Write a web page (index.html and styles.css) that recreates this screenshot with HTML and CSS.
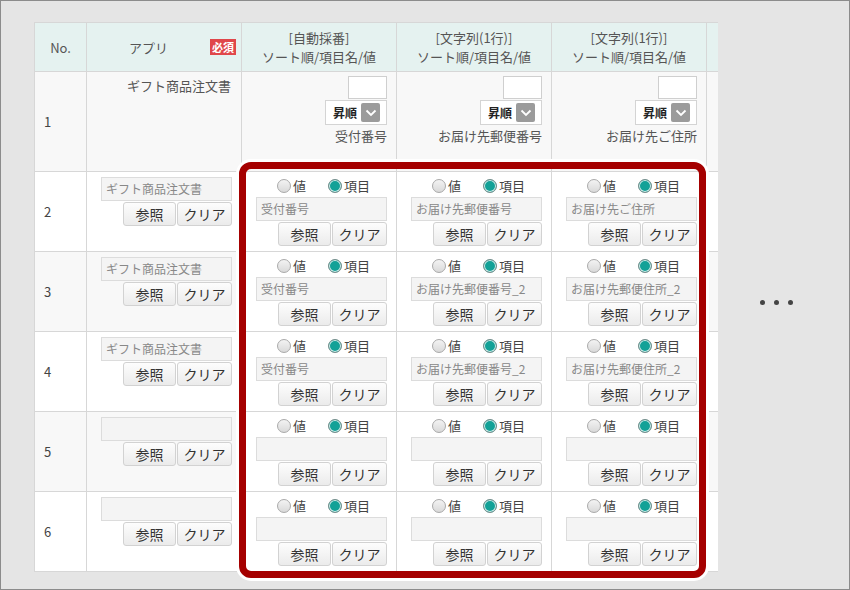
FILE: index.html
```html
<!DOCTYPE html>
<html lang="ja">
<head>
<meta charset="utf-8">
<link rel="stylesheet" href="styles.css">
</head>
<body>
<div class="frame">
  <div class="sheet">
    <!-- header -->
    <div class="hd">No.</div>
    <div class="hd hd-app"><span class="hd-label">アプリ</span><span class="badge">必須</span></div>
    <div class="hd hd-field"><span>[自動採番]</span><span>ソート順/項目名/値</span></div>
    <div class="hd hd-field"><span>[文字列(1行)]</span><span>ソート順/項目名/値</span></div>
    <div class="hd hd-field"><span>[文字列(1行)]</span><span>ソート順/項目名/値</span></div>
    <div class="hd"></div>

    <!-- row 1 -->
    <div class="c no r-alt">1</div>
    <div class="c app1 r-alt">ギフト商品注文書</div>
    <div class="c fld1 r-alt"><div class="num"></div><div class="sel"><span class="sel-t">昇順</span><span class="sel-a"><svg width="12" height="8" viewBox="0 0 12 8"><path d="M1.5 1.5 L6 6 L10.5 1.5" fill="none" stroke="#fff" stroke-width="1.8"/></svg></span></div><div class="lbl">受付番号</div></div>
    <div class="c fld1 r-alt"><div class="num"></div><div class="sel"><span class="sel-t">昇順</span><span class="sel-a"><svg width="12" height="8" viewBox="0 0 12 8"><path d="M1.5 1.5 L6 6 L10.5 1.5" fill="none" stroke="#fff" stroke-width="1.8"/></svg></span></div><div class="lbl">お届け先郵便番号</div></div>
    <div class="c fld1 r-alt"><div class="num"></div><div class="sel"><span class="sel-t">昇順</span><span class="sel-a"><svg width="12" height="8" viewBox="0 0 12 8"><path d="M1.5 1.5 L6 6 L10.5 1.5" fill="none" stroke="#fff" stroke-width="1.8"/></svg></span></div><div class="lbl">お届け先ご住所</div></div>
    <div class="c r-alt"></div>

    <!-- row 2 -->
    <div class="c no">2</div>
    <div class="c app"><div class="field">ギフト商品注文書</div><div class="btns"><span class="btn b1">参照</span><span class="btn b2">クリア</span></div></div>
    <div class="c val"><div class="radios"><span class="rd"></span><span class="rl">値</span><span class="rd on"></span><span class="rl">項目</span></div><div class="field">受付番号</div><div class="btns"><span class="btn b1">参照</span><span class="btn b2">クリア</span></div></div>
    <div class="c val"><div class="radios"><span class="rd"></span><span class="rl">値</span><span class="rd on"></span><span class="rl">項目</span></div><div class="field">お届け先郵便番号</div><div class="btns"><span class="btn b1">参照</span><span class="btn b2">クリア</span></div></div>
    <div class="c val"><div class="radios"><span class="rd"></span><span class="rl">値</span><span class="rd on"></span><span class="rl">項目</span></div><div class="field">お届け先ご住所</div><div class="btns"><span class="btn b1">参照</span><span class="btn b2">クリア</span></div></div>
    <div class="c"></div>

    <!-- row 3 -->
    <div class="c no r-alt">3</div>
    <div class="c app r-alt"><div class="field">ギフト商品注文書</div><div class="btns"><span class="btn b1">参照</span><span class="btn b2">クリア</span></div></div>
    <div class="c val"><div class="radios"><span class="rd"></span><span class="rl">値</span><span class="rd on"></span><span class="rl">項目</span></div><div class="field">受付番号</div><div class="btns"><span class="btn b1">参照</span><span class="btn b2">クリア</span></div></div>
    <div class="c val"><div class="radios"><span class="rd"></span><span class="rl">値</span><span class="rd on"></span><span class="rl">項目</span></div><div class="field">お届け先郵便番号_2</div><div class="btns"><span class="btn b1">参照</span><span class="btn b2">クリア</span></div></div>
    <div class="c val"><div class="radios"><span class="rd"></span><span class="rl">値</span><span class="rd on"></span><span class="rl">項目</span></div><div class="field">お届け先郵便住所_2</div><div class="btns"><span class="btn b1">参照</span><span class="btn b2">クリア</span></div></div>
    <div class="c r-alt"></div>

    <!-- row 4 -->
    <div class="c no">4</div>
    <div class="c app"><div class="field">ギフト商品注文書</div><div class="btns"><span class="btn b1">参照</span><span class="btn b2">クリア</span></div></div>
    <div class="c val"><div class="radios"><span class="rd"></span><span class="rl">値</span><span class="rd on"></span><span class="rl">項目</span></div><div class="field">受付番号</div><div class="btns"><span class="btn b1">参照</span><span class="btn b2">クリア</span></div></div>
    <div class="c val"><div class="radios"><span class="rd"></span><span class="rl">値</span><span class="rd on"></span><span class="rl">項目</span></div><div class="field">お届け先郵便番号_2</div><div class="btns"><span class="btn b1">参照</span><span class="btn b2">クリア</span></div></div>
    <div class="c val"><div class="radios"><span class="rd"></span><span class="rl">値</span><span class="rd on"></span><span class="rl">項目</span></div><div class="field">お届け先郵便住所_2</div><div class="btns"><span class="btn b1">参照</span><span class="btn b2">クリア</span></div></div>
    <div class="c"></div>

    <!-- row 5 -->
    <div class="c no r-alt">5</div>
    <div class="c app r-alt"><div class="field"></div><div class="btns"><span class="btn b1">参照</span><span class="btn b2">クリア</span></div></div>
    <div class="c val"><div class="radios"><span class="rd"></span><span class="rl">値</span><span class="rd on"></span><span class="rl">項目</span></div><div class="field"></div><div class="btns"><span class="btn b1">参照</span><span class="btn b2">クリア</span></div></div>
    <div class="c val"><div class="radios"><span class="rd"></span><span class="rl">値</span><span class="rd on"></span><span class="rl">項目</span></div><div class="field"></div><div class="btns"><span class="btn b1">参照</span><span class="btn b2">クリア</span></div></div>
    <div class="c val"><div class="radios"><span class="rd"></span><span class="rl">値</span><span class="rd on"></span><span class="rl">項目</span></div><div class="field"></div><div class="btns"><span class="btn b1">参照</span><span class="btn b2">クリア</span></div></div>
    <div class="c r-alt"></div>

    <!-- row 6 -->
    <div class="c no">6</div>
    <div class="c app"><div class="field"></div><div class="btns"><span class="btn b1">参照</span><span class="btn b2">クリア</span></div></div>
    <div class="c val"><div class="radios"><span class="rd"></span><span class="rl">値</span><span class="rd on"></span><span class="rl">項目</span></div><div class="field"></div><div class="btns"><span class="btn b1">参照</span><span class="btn b2">クリア</span></div></div>
    <div class="c val"><div class="radios"><span class="rd"></span><span class="rl">値</span><span class="rd on"></span><span class="rl">項目</span></div><div class="field"></div><div class="btns"><span class="btn b1">参照</span><span class="btn b2">クリア</span></div></div>
    <div class="c val"><div class="radios"><span class="rd"></span><span class="rl">値</span><span class="rd on"></span><span class="rl">項目</span></div><div class="field"></div><div class="btns"><span class="btn b1">参照</span><span class="btn b2">クリア</span></div></div>
    <div class="c"></div>
  </div>

  <div class="more"><span class="dot"></span><span class="dot"></span><span class="dot"></span></div>

  <div class="highlight"></div>
</div>
</body>
</html>
```

FILE: styles.css
```css
html, body {
  margin: 0;
  padding: 0;
}

body {
  font-family: "Noto Sans CJK JP", "Noto Sans", sans-serif;
  color: #555;
}

.frame {
  position: relative;
  width: 850px;
  height: 590px;
  box-sizing: border-box;
  border: 1px solid #8c8c8c;
  background: #e5e5e5;
  padding: 21px 0 0 33px;
  display: flex;
  align-items: flex-start;
  overflow: hidden;
}

.sheet {
  display: grid;
  grid-template-columns: 51px 154px 154px 154px 154px 11px;
  grid-template-rows: 48px 99px 79px 79px 79px 79px 79px;
  gap: 1px;
  padding: 1px 0 1px 1px;
  background: #d7d7d7;
}

.hd {
  background: #e5f2f0;
  display: flex;
  align-items: center;
  justify-content: center;
  font-size: 13px;
  color: #555;
}

.hd-app {
  justify-content: space-between;
  padding-right: 5px;
}

.hd-label {
  flex: 1;
  text-align: center;
}

.badge {
  background: #e0474a;
  color: #fff;
  font-size: 11px;
  line-height: 16px;
  height: 16px;
  padding: 0 2px;
  font-weight: bold;
}

.hd-field {
  flex-direction: column;
  line-height: 19px;
}

.c {
  background: #fff;
  font-size: 13px;
  color: #555;
}

.r-alt {
  background: #f8f8f8;
}

.no {
  display: flex;
  align-items: center;
  padding-left: 9px;
  color: #444;
}

.app1 {
  text-align: right;
  padding: 5px 10px 0 0;
  line-height: 18px;
}

.fld1 {
  display: flex;
  flex-direction: column;
  align-items: flex-end;
  padding: 4px 9px 0 0;
}

.num {
  width: 39px;
  height: 23px;
  box-sizing: border-box;
  border: 1px solid #cfcfcf;
  background: #fff;
}

.sel {
  width: 62px;
  height: 25px;
  box-sizing: border-box;
  border: 1px solid #d4d4d4;
  background: #fff;
  display: flex;
  align-items: center;
  justify-content: space-between;
  padding: 0 6px 0 7px;
  margin-top: 1px;
}

.sel-t {
  font-size: 12px;
  font-weight: bold;
  color: #222;
}

.sel-a {
  width: 19px;
  height: 19px;
  background: #9b9b9b;
  border-radius: 2px;
  display: flex;
  align-items: center;
  justify-content: center;
}

.lbl {
  margin-top: 2px;
  line-height: 18px;
}

.app {
  display: flex;
  flex-direction: column;
  align-items: flex-end;
  padding: 5px 9px 0 0;
}

.val {
  display: flex;
  flex-direction: column;
  align-items: flex-end;
  padding: 5px 9px 0 0;
}

.field {
  width: 131px;
  height: 24px;
  box-sizing: border-box;
  border: 1px solid #dcdcdc;
  background: #f4f4f4;
  font-size: 12px;
  color: #888;
  line-height: 22px;
  padding-left: 4px;
  white-space: nowrap;
  overflow: hidden;
}

.btns {
  display: flex;
  gap: 1px;
  margin-top: 1px;
}

.btn {
  height: 24px;
  box-sizing: border-box;
  border: 1px solid #d2d2d2;
  border-radius: 3px;
  background: linear-gradient(#fdfdfd, #ebebeb);
  font-size: 14px;
  color: #333;
  display: flex;
  align-items: center;
  justify-content: center;
}

.b1 { width: 53px; }
.b2 { width: 55px; }

.radios {
  align-self: stretch;
  display: flex;
  align-items: center;
  height: 18px;
  padding-left: 35px;
  margin-bottom: 2px;
}

.rd {
  width: 14px;
  height: 14px;
  box-sizing: border-box;
  border-radius: 50%;
  border: 1px solid #a9a9a9;
  background: linear-gradient(#f3f3f3, #d9d9d9);
  flex: none;
}

.rd.on {
  background: #12a197;
  border-color: #7a8f8d;
  box-shadow: inset 0 0 0 1px #d8efed;
  margin-left: 22px;
}

.rl {
  font-size: 13px;
  color: #444;
  margin-left: 2px;
  line-height: 18px;
}

.more {
  display: flex;
  gap: 9px;
  margin: 278px 0 0 42px;
}

.dot {
  width: 5px;
  height: 5px;
  border-radius: 50%;
  background: #444;
}

.highlight {
  position: absolute;
  left: 238px;
  top: 161px;
  width: 467px;
  height: 416px;
  box-sizing: border-box;
  border: 7px solid #a50000;
  border-radius: 12px;
  box-shadow: 0 0 0 3px #fff;
}
```
